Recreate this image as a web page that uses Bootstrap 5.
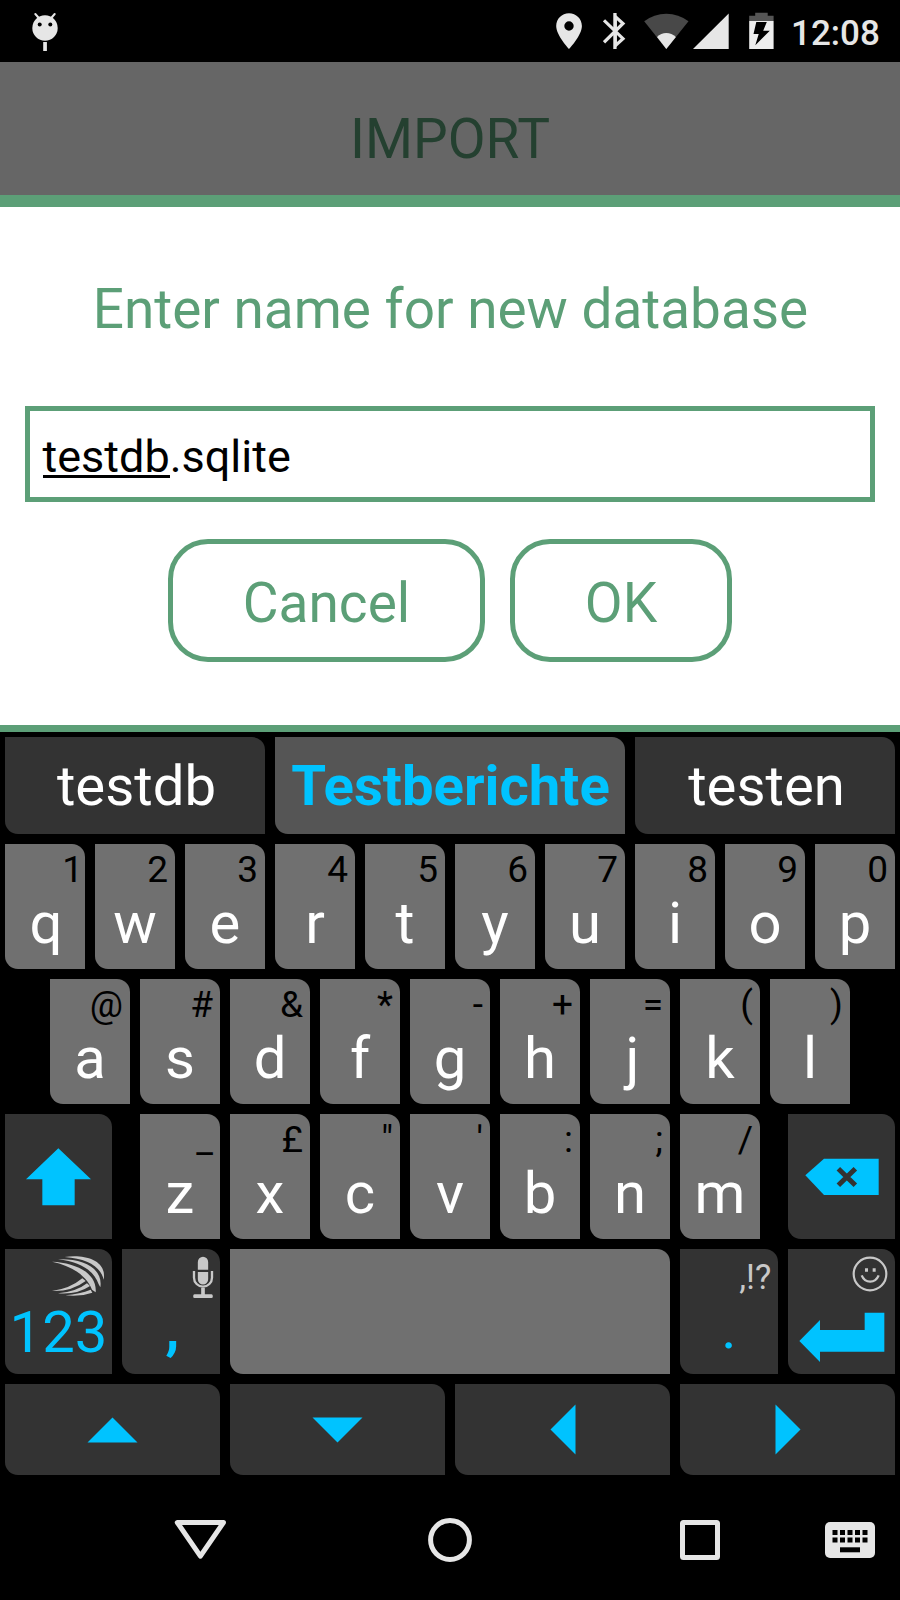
<!DOCTYPE html>
<html lang="en">
<head>
<meta charset="utf-8">
<meta name="viewport" content="width=device-width, initial-scale=1">
<title>Import</title>
<link href="https://cdn.jsdelivr.net/npm/bootstrap@5.3.0/dist/css/bootstrap.min.css" rel="stylesheet">
<style>
  :root { --green: #5c9f77; --cyan: #00c3ff; --soft: #e6e6e6; }
  body { font-family: Roboto, sans-serif; background: #000; width: 900px; height: 1600px; overflow: hidden; }
  svg { display: block; flex: none; }
  .status-bar { height: 62px; padding: 0 0 0 32px; color: var(--soft); }
  .clock { font-size: 35px; font-weight: 500; line-height: 62px; width: 109px; padding-top: 3px; height: 62px; }
  .app-header { height: 133px; background: #666; color: #244030; font-size: 55px; line-height: 155px; }
  .dialog { height: 537px; border-top: 12px solid var(--green); border-bottom: 7px solid var(--green); padding: 62px 25px 0; color: var(--green); }
  .dialog-title { font-size: 54.9px; line-height: 80px; font-weight: 400; margin: 0 0 57px; padding-left: 1px; }
  .name-field { height: 96px; border: 5px solid var(--green); padding: 0 12.5px; color: #000; font-size: 45px; line-height: 91px; margin-bottom: 37px; }
  .name-field u { text-decoration: none; background: linear-gradient(#000, #000) 0 45px / 100% 3px no-repeat; }
  .dialog-btn { height: 123px; border: 5px solid var(--green); border-radius: 40px; color: var(--green); font-size: 55px; line-height: 119px; padding: 0; }
  .btn-cancel { width: 317px; }
  .btn-ok { width: 222px; }
  .keyboard { padding: 4.5px 5px 0; gap: 10px; }
  .keyrow { gap: 10px; }
  .key { width: 80px; height: 125px; background: #707070; color: #fff; border-radius: 0 13px 0 13px; font-size: 58px; line-height: 92px; padding-top: 33px; text-align: center; position: relative; flex: none; }
  .key small { position: absolute; top: 0; right: 7px; font-size: 37px; font-weight: 400; line-height: 52px; color: #000; }
  .key .one { right: 2px; }
  .key.k-q { padding-left: 2px; }
  .key.k-j { padding-left: 5px; }
  .key.dark { background: #333; color: var(--cyan); }
  .key.k123 { padding-top: 37px; }
  .key.kcomma { font-weight: 700; padding-left: 3px; }
  .key.kdot small { color: #c8c8c8; font-size: 34.5px; line-height: 57px; }
  .key > svg { position: absolute; top: 0; left: 0; }
  .w-side { width: 107px; }
  .w-punct { width: 98.5px; }
  .w-space { width: 440px; }
  .suggest { height: 97.5px; width: 260px; background: #333; color: #fff; border-radius: 0 13px 0 13px; font-size: 56.3px; line-height: 98px; text-align: center; padding-left: 3px; }
  .suggest.best { width: 350px; background: #555; color: var(--cyan); font-weight: 700; padding-left: 1px; }
  .arrow { width: 215px; height: 91px; background: #333; border-radius: 0 13px 0 13px; }
  .nav-strip { height: 125px; padding-left: 174px; padding-top: 5px; }
</style>
</head>
<body>
<div class="status-bar d-flex align-items-center">
  <svg width="26" height="62" viewBox="32 0 26 62"><g fill="#e6e6e6"><circle cx="45" cy="28" r="12.7"/><rect x="43.2" y="42" width="3.7" height="9"/></g><path d="M35.3 14l4 4.5M54.7 14l-4 4.5" stroke="#e6e6e6" stroke-width="2" stroke-linecap="round"/><circle cx="39.7" cy="24.5" r="2"/><circle cx="50.3" cy="24.5" r="2"/></svg>
  <svg class="ms-auto" width="26" height="62" viewBox="556 0 26 62"><path fill="#e6e6e6" fill-rule="evenodd" d="M569 13.3c-7.2 0-12.8 5.700-12.800 12.700C556.200 35.500 569 49 569 49s12.900-13.500 12.900-23C581.900 19 576.200 13.300 569 13.300zm0 8a4.700 4.700 0 1 1 0 9.400 4.700 4.700 0 0 1 0-9.400z"/></svg>
  <svg style="margin-left:21px" width="23" height="62" viewBox="603 0 23 62"><path fill="none" stroke="#e6e6e6" stroke-width="3.2" d="M604 20.300L623 38.600l-7.700 7V16.500l7.700 7L604 42.300"/><path d="M615 13v36" stroke="#e6e6e6" stroke-width="3.2"/></svg>
  <svg style="margin-left:18px" width="45" height="62" viewBox="644 0 45 62"><path fill="#484848" d="M666.300 49L644.200 21.300Q654 13.700 666.300 13.700T688.500 21.300z"/><path fill="#e6e6e6" d="M666.300 49L657 37Q661 33 666.300 33T675.900 37z"/></svg>
  <svg style="margin-left:4px" width="36" height="62" viewBox="693 0 36 62"><path fill="#e6e6e6" d="M693 49l35.700-35.500V49z"/></svg>
  <svg style="margin-left:20px" width="25" height="62" viewBox="749 0 25 62"><path fill="#555" d="M749.200 21v-5.300h6V12.700h12.500v3h5.900V21z"/><path fill="#eee" d="M749.200 21h24.400v28h-24.400z"/><path d="M756.300 22h10.500l-3.600 8.700h6.600L755.300 45.300l3.400-11.300h-5.200z"/></svg>
  <div class="clock" style="margin-left:17px">12:08</div>
</div>

<header class="app-header text-center">IMPORT</header>

<main class="dialog bg-white">
  <h1 class="dialog-title text-center">Enter name for new database</h1>
  <div class="name-field"><u>testdb</u>.sqlite</div>
  <div class="d-flex justify-content-center" style="gap:25px">
    <button class="btn dialog-btn btn-cancel">Cancel</button>
    <button class="btn dialog-btn btn-ok">OK</button>
  </div>
</main>

<section class="keyboard d-flex flex-column">
  <div class="keyrow d-flex">
    <div class="suggest">testdb</div><div class="suggest best">Testberichte</div><div class="suggest">testen</div>
  </div>
  <div class="keyrow d-flex">
    <div class="key k-q">q<small class="one">1</small></div><div class="key">w<small>2</small></div><div class="key">e<small>3</small></div><div class="key">r<small>4</small></div><div class="key">t<small>5</small></div><div class="key">y<small>6</small></div><div class="key">u<small>7</small></div><div class="key">i<small>8</small></div><div class="key">o<small>9</small></div><div class="key">p<small>0</small></div>
  </div>
  <div class="keyrow d-flex justify-content-center">
    <div class="key">a<small>@</small></div><div class="key">s<small>#</small></div><div class="key">d<small>&amp;</small></div><div class="key">f<small>*</small></div><div class="key">g<small>-</small></div><div class="key">h<small>+</small></div><div class="key k-j">j<small>=</small></div><div class="key">k<small>(</small></div><div class="key">l<small>)</small></div>
  </div>
  <div class="d-flex justify-content-between">
    <div class="key dark w-side"><svg width="107" height="125" viewBox="15 432 321 375"><path fill="#00c3ff" d="M175 535l98 93h-49v78h-97v-78H78z"/></svg></div>
    <div class="keyrow d-flex">
      <div class="key">z<small>_</small></div><div class="key">x<small>£</small></div><div class="key">c<small>"</small></div><div class="key">v<small>'</small></div><div class="key">b<small>:</small></div><div class="key">n<small>;</small></div><div class="key">m<small>/</small></div>
    </div>
    <div class="key dark w-side"><svg width="107" height="125" viewBox="1014 432 321 375"><path fill="#00c3ff" d="M1066 616l56-50h164v109h-164z"/><path stroke="#333" stroke-width="15" d="M1165 596l51 50M1216 596l-51 50"/></svg></div>
  </div>
  <div class="d-flex justify-content-between">
    <div class="key dark w-side k123">123
      <svg width="107" height="125" viewBox="15 27 321 375" fill="#c8c8c8"><path d="M194 51C250 42 322 58 311 119C302 80 262 56 194 51zM174 58C250 55 310 85 301 142L296 133C282 92 242 66 174 58zM156 65C225 68 292 98 287 157L276 149C260 108 216 77 156 65z"/><path d="M156 153Q210 146 247 115L257 123Q215 155 156 153zM174 160Q228 156 261 130L270 138Q230 165 174 160zM196 166Q240 162 272 149L277 158Q240 171 196 166z"/></svg></div>
    <div class="key dark w-punct kcomma">,
      <svg width="98.500" height="125" viewBox="364.500 27 295.500 375" fill="#c8c8c8"><path d="M592 89V66a15.500 15.500 0 0 1 31 0v23zM592 96h31v22a15.500 15.500 0 0 1-31 0zM602 143h11v20h20q4 0 4 5.500t-4 5.500h-51q-4 0-4-5.500t4-5.500h20z"/><path fill="none" stroke="#c8c8c8" stroke-width="7" d="M580.500 93v20a27 27 0 0 0 54 0V93"/></svg></div>
    <div class="key w-space"></div>
    <div class="key dark w-punct kdot">.<small>,!?</small></div>
    <div class="key dark w-side"><svg width="107" height="125" viewBox="444 27 321 375"><path fill="#00c3ff" d="M478 303l62-63v30h134v-52h59v117H540v31z"/><circle cx="690" cy="102" r="49" fill="none" stroke="#c8c8c8" stroke-width="6.500"/><path fill="#c8c8c8" d="M675 85h9v10h-9zM698 85h9v10h-9z"/><path fill="none" stroke="#c8c8c8" stroke-width="7" d="M665 106q8 19 25.500 19t25.500-19"/></svg></div>
  </div>
  <div class="keyrow d-flex">
    <div class="arrow d-flex align-items-center justify-content-center"><svg width="51" height="26" viewBox="0 0 51 26"><path fill="#00c3ff" d="M.5 25.500l25-25 25 25z"/></svg></div>
    <div class="arrow d-flex align-items-center justify-content-center"><svg width="51" height="26" viewBox="0 0 51 26"><path fill="#00c3ff" d="M.5.5l25 25 25-25z"/></svg></div>
    <div class="arrow d-flex align-items-center justify-content-center"><svg width="26" height="51" viewBox="0 0 26 51"><path fill="#00c3ff" d="M25.500.5l-25 25 25 25z"/></svg></div>
    <div class="arrow d-flex align-items-center justify-content-center"><svg width="26" height="51" viewBox="0 0 26 51"><path fill="#00c3ff" d="M.5.5l25 25-25 25z"/></svg></div>
  </div>
</section>

<nav class="nav-strip d-flex align-items-center">
  <svg width="53" height="50" viewBox="174 1515 53 50"><path fill="none" stroke="#e6e6e6" stroke-width="5" stroke-linejoin="round" d="M177.300 1522.500h46.200l-23.100 33.700z"/></svg>
  <svg style="margin-left:200px" width="46" height="50" viewBox="427 1515 46 50"><circle cx="450" cy="1540" r="19.400" fill="none" stroke="#e6e6e6" stroke-width="5"/></svg>
  <svg style="margin-left:207px" width="40" height="50" viewBox="680 1515 40 50"><rect x="682.500" y="1522.500" width="35" height="35" rx="1" fill="none" stroke="#e6e6e6" stroke-width="5" stroke-linejoin="round"/></svg>
  <svg style="margin-left:105px" width="50" height="50" viewBox="825 1515 50 50"><rect x="825" y="1522" width="50" height="36" rx="5" fill="#e6e6e6"/><path stroke="#000" stroke-width="5" stroke-dasharray="5 2.500" d="M832.500 1532.500h35M832.500 1540h35"/><path d="M840 1547.300h20v5h-20z"/></svg>
</nav>
<script src="https://cdn.jsdelivr.net/npm/bootstrap@5.3.0/dist/js/bootstrap.bundle.min.js"></script>
</body>
</html>
